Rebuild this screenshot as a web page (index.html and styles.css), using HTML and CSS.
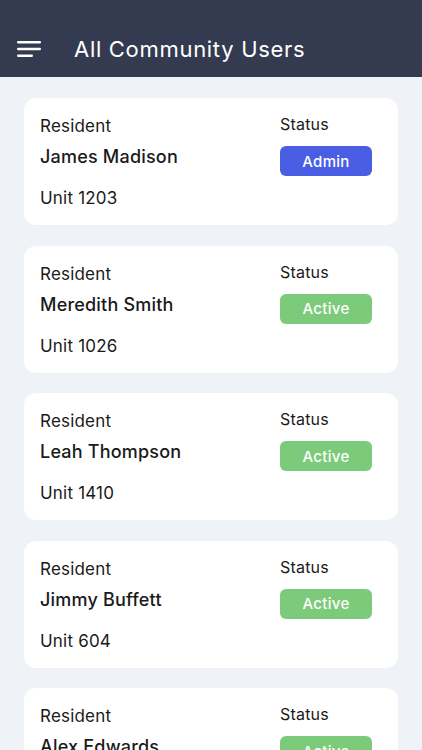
FILE: index.html
```html
<!DOCTYPE html>
<html>
<head>
<meta charset="utf-8">
<link rel="stylesheet" href="styles.css">
</head>
<body>
<header class="topbar">
  <svg class="menu" width="24" height="16" viewBox="0 0 24 16"><rect x="0" y="0" width="24" height="2.6" rx="1.3" fill="#fff"/><rect x="0" y="6.7" width="24" height="2.6" rx="1.3" fill="#fff"/><rect x="0" y="13.4" width="16" height="2.6" rx="1.3" fill="#fff"/></svg>
  <h1 class="title">All Community Users</h1>
</header>
<main class="list">
  <div class="card">
    <div class="info">
      <div class="label">Resident</div>
      <div class="name">James Madison</div>
      <div class="unit">Unit 1203</div>
    </div>
    <div class="status">
      <div class="label small">Status</div>
      <div class="badge admin">Admin</div>
    </div>
  </div>
  <div class="card">
    <div class="info">
      <div class="label">Resident</div>
      <div class="name">Meredith Smith</div>
      <div class="unit">Unit 1026</div>
    </div>
    <div class="status">
      <div class="label small">Status</div>
      <div class="badge active">Active</div>
    </div>
  </div>
  <div class="card">
    <div class="info">
      <div class="label">Resident</div>
      <div class="name">Leah Thompson</div>
      <div class="unit">Unit 1410</div>
    </div>
    <div class="status">
      <div class="label small">Status</div>
      <div class="badge active">Active</div>
    </div>
  </div>
  <div class="card">
    <div class="info">
      <div class="label">Resident</div>
      <div class="name">Jimmy Buffett</div>
      <div class="unit">Unit 604</div>
    </div>
    <div class="status">
      <div class="label small">Status</div>
      <div class="badge active">Active</div>
    </div>
  </div>
  <div class="card">
    <div class="info">
      <div class="label">Resident</div>
      <div class="name">Alex Edwards</div>
      <div class="unit">Unit 1530</div>
    </div>
    <div class="status">
      <div class="label small">Status</div>
      <div class="badge active">Active</div>
    </div>
  </div>
</main>
</body>
</html>
```
FILE: styles.css
```css
html, body {
  margin: 0;
  padding: 0;
}
html {
  height: 750px;
  overflow: hidden;
}
body {
  background: #eff2f7;
  font-family: "Inter", "Open Sans", sans-serif;
  color: #1a1a1a;
  height: 750px;
  overflow: hidden;
}
.topbar {
  height: 77px;
  background: #343a4f;
  display: flex;
  align-items: flex-end;
  padding: 0 0 13px 17px;
  box-sizing: border-box;
}
.menu {
  display: block;
  margin-bottom: 7px;
}
.title {
  margin: 0 0 0 33px;
  color: #fff;
  font-size: 22px;
  font-weight: 400;
  line-height: 30px;
  letter-spacing: 0.7px;
}
.list {
  padding: 21px 24px 0;
  display: flex;
  flex-direction: column;
  gap: 20.5px;
}
.card {
  background: #fff;
  border-radius: 12px;
  height: 127px;
  box-sizing: border-box;
  padding: 15px 26px 0 16px;
  display: flex;
  justify-content: space-between;
  flex-shrink: 0;
}
.info {
  display: flex;
  flex-direction: column;
}
.label {
  font-size: 17px;
  line-height: 26px;
  letter-spacing: 0.2px;
}
.small {
  font-size: 16px;
  line-height: 22px;
}
.name {
  font-size: 18px;
  font-weight: 500;
  line-height: 26px;
  margin-top: 5px;
  letter-spacing: 0.2px;
}
.unit {
  font-size: 17px;
  line-height: 26px;
  margin-top: 15px;
  letter-spacing: 0.2px;
}
.status {
  width: 92px;
  display: flex;
  flex-direction: column;
}
.badge {
  margin-top: 11px;
  height: 30px;
  border-radius: 6px;
  color: #fff;
  font-size: 15px;
  font-weight: 500;
  letter-spacing: 0.3px;
  display: flex;
  align-items: center;
  justify-content: center;
}
.admin { background: #4a5ee4; }
.active { background: #7ccb7a; }
```
